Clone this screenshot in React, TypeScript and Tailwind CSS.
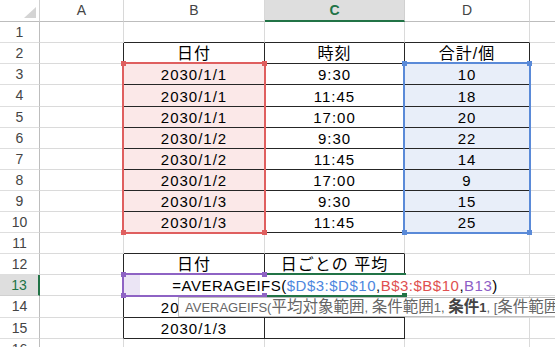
import clsx from 'clsx';

const COLS = ['A', 'B', 'C', 'D', 'E'];
const ROWS = Array.from({ length: 16 }, (_, i) => i + 1);

const dates = ['2030/1/1', '2030/1/1', '2030/1/1', '2030/1/2', '2030/1/2', '2030/1/2', '2030/1/3', '2030/1/3'];
const times = ['9:30', '11:45', '17:00', '9:30', '11:45', '17:00', '9:30', '11:45'];
const counts = ['10', '18', '20', '22', '14', '9', '15', '25'];

const values: Record<string, string> = {
  B2: '日付',
  C2: '時刻',
  D2: '合計/個',
  B12: '日付',
  C12: '日ごとの 平均',
  B14: '2030/1/3',
  B15: '2030/1/3',
};
dates.forEach((v, i) => (values[`B${i + 3}`] = v));
times.forEach((v, i) => (values[`C${i + 3}`] = v));
counts.forEach((v, i) => (values[`D${i + 3}`] = v));

const jp = new Set(['B2', 'C2', 'D2', 'B12', 'C12']);

function cellClass(c: number, r: number) {
  const right = (r >= 2 && r <= 10 && c <= 3) || (r >= 12 && r <= 15 && c <= 2);
  const bottom = (r >= 1 && r <= 10 && c >= 1 && c <= 3) || (r >= 11 && r <= 15 && c >= 1 && c <= 2);
  return clsx(
    'flex items-end justify-center overflow-hidden whitespace-nowrap border-b border-r leading-[19px] text-black',
    right ? 'border-r-[#262626]' : 'border-r-[#dadada]',
    bottom ? 'border-b-[#262626]' : 'border-b-[#dadada]',
    c === 1 && r >= 3 && r <= 10 && 'bg-[#fbe8e8]',
    c === 3 && r >= 3 && r <= 10 && 'bg-[#e8eef9]',
    c === 1 && r === 13 && 'bg-[#ebe5f5]',
  );
}

// corner handles for a selection box (drawn inside a border-2 box)
function Handles({ color, only }: { color: string; only?: 'br' }) {
  const base = clsx('absolute z-20 h-[5px] w-[5px]', color);
  if (only === 'br') return <span className={clsx(base, '-bottom-[3px] -right-[3px]')} />;
  return (
    <>
      <span className={clsx(base, '-left-[3px] -top-[3px]')} />
      <span className={clsx(base, '-right-[3px] -top-[3px]')} />
      <span className={clsx(base, '-bottom-[3px] -left-[3px]')} />
      <span className={clsx(base, '-bottom-[3px] -right-[3px]')} />
    </>
  );
}

const Jp = ({ children }: { children: string }) => <span className="text-[15.5px]">{children}</span>;

export default function App() {
  return (
    <div className="relative grid h-[347px] w-[555px] grid-cols-[40px_84px_141px_140px_125px_84px] grid-rows-[22px_21px_21px_21px_22px_21px_21px_21px_21px_21px_21px_21px_21px_21px_22px_21px_21px] overflow-hidden bg-white font-['Liberation_Sans','Noto_Sans_CJK_JP',sans-serif] text-[15px]">
      {/* corner */}
      <div className="relative border-b border-r border-b-[#bdbdbd] border-r-[#d0d0d0]">
        <svg className="absolute left-[24px] top-[7px]" width="12" height="11" viewBox="0 0 12 11">
          <polygon points="12,0 12,11 0,11" fill="#d4d4d4" />
        </svg>
      </div>
      {COLS.map((col) => (
        <div
          key={col}
          className={clsx(
            'flex items-center justify-center text-[14px]',
            col === 'C'
              ? 'border-b-2 border-r border-b-[#217346] border-r-[#d0d0d0] bg-[#dedede] pt-[1px] font-bold text-[#217346]'
              : 'border-b border-r border-b-[#bdbdbd] border-r-[#d8d8d8] text-[#444]',
          )}
        >
          {col}
        </div>
      ))}

      {ROWS.map((r) => [
        <div
          key={`h${r}`}
          className={clsx(
            'flex items-center justify-center text-[14px]',
            r === 13
              ? 'border-b border-r-2 border-b-[#d0d0d0] border-r-[#217346] bg-[#dedede] text-[#217346]'
              : 'border-b border-r border-b-[#dedede] border-r-[#bdbdbd] text-[#444]',
          )}
        >
          {r}
        </div>,
        ...COLS.map((col, c) => {
          const key = `${col}${r}`;
          const v = values[key];
          return (
            <div key={key} className={cellClass(c, r)}>
              {v && (
                <span className={jp.has(key) ? 'text-[16px] tracking-[1px]' : 'tracking-[1px]'}>{v}</span>
              )}
            </div>
          );
        }),
      ])}

      {/* range highlights from the formula being edited */}
      <div className="absolute left-[122px] top-[62px] h-[172px] w-[144px] border-2 border-[#df5f5f]">
        <Handles color="bg-[#df5f5f]" />
      </div>
      <div className="absolute left-[403px] top-[62px] h-[172px] w-[128px] border-2 border-[#5a8ad8]">
        <Handles color="bg-[#5a8ad8]" />
      </div>
      <div className="absolute left-[122px] top-[273px] h-[24px] w-[144px] border-2 border-[#8e63c4]">
        <Handles color="bg-[#8e63c4]" />
      </div>
      <div className="absolute left-[263px] top-[273px] h-[24px] w-[143px] border-2 border-[#217346]">
        <Handles color="bg-[#217346]" only="br" />
      </div>

      {/* in-cell editor */}
      <div className="absolute left-[140px] top-[275px] z-10 flex h-[20px] w-[390px] items-end justify-center bg-white leading-[19px] tracking-[0.5px] text-black">
        <span>
          =AVERAGEIFS(<span className="text-[#4c86de]">$D$3:$D$10</span>,
          <span className="text-[#e05050]">B$3:$B$10</span>,<span className="text-[#8c5ec6]">B13</span>)
        </span>
      </div>

      {/* function tooltip */}
      <div className="absolute left-[178px] top-[297px] z-30 flex h-[20px] w-[400px] items-center border border-[#bfbfbf] bg-white pl-[6px] text-[13px] whitespace-pre text-[#666]">
        <span>
          {'AVERAGEIFS('}
          <Jp>平均対象範囲</Jp>
          {', '}
          <Jp>条件範囲</Jp>
          {'1, '}
          <b className="text-[#444]">
            <Jp>条件</Jp>1
          </b>
          {', ['}
          <Jp>条件範囲</Jp>
          {'2, '}
          <Jp>条件</Jp>
          {'2], ...)'}
        </span>
      </div>
    </div>
  );
}
